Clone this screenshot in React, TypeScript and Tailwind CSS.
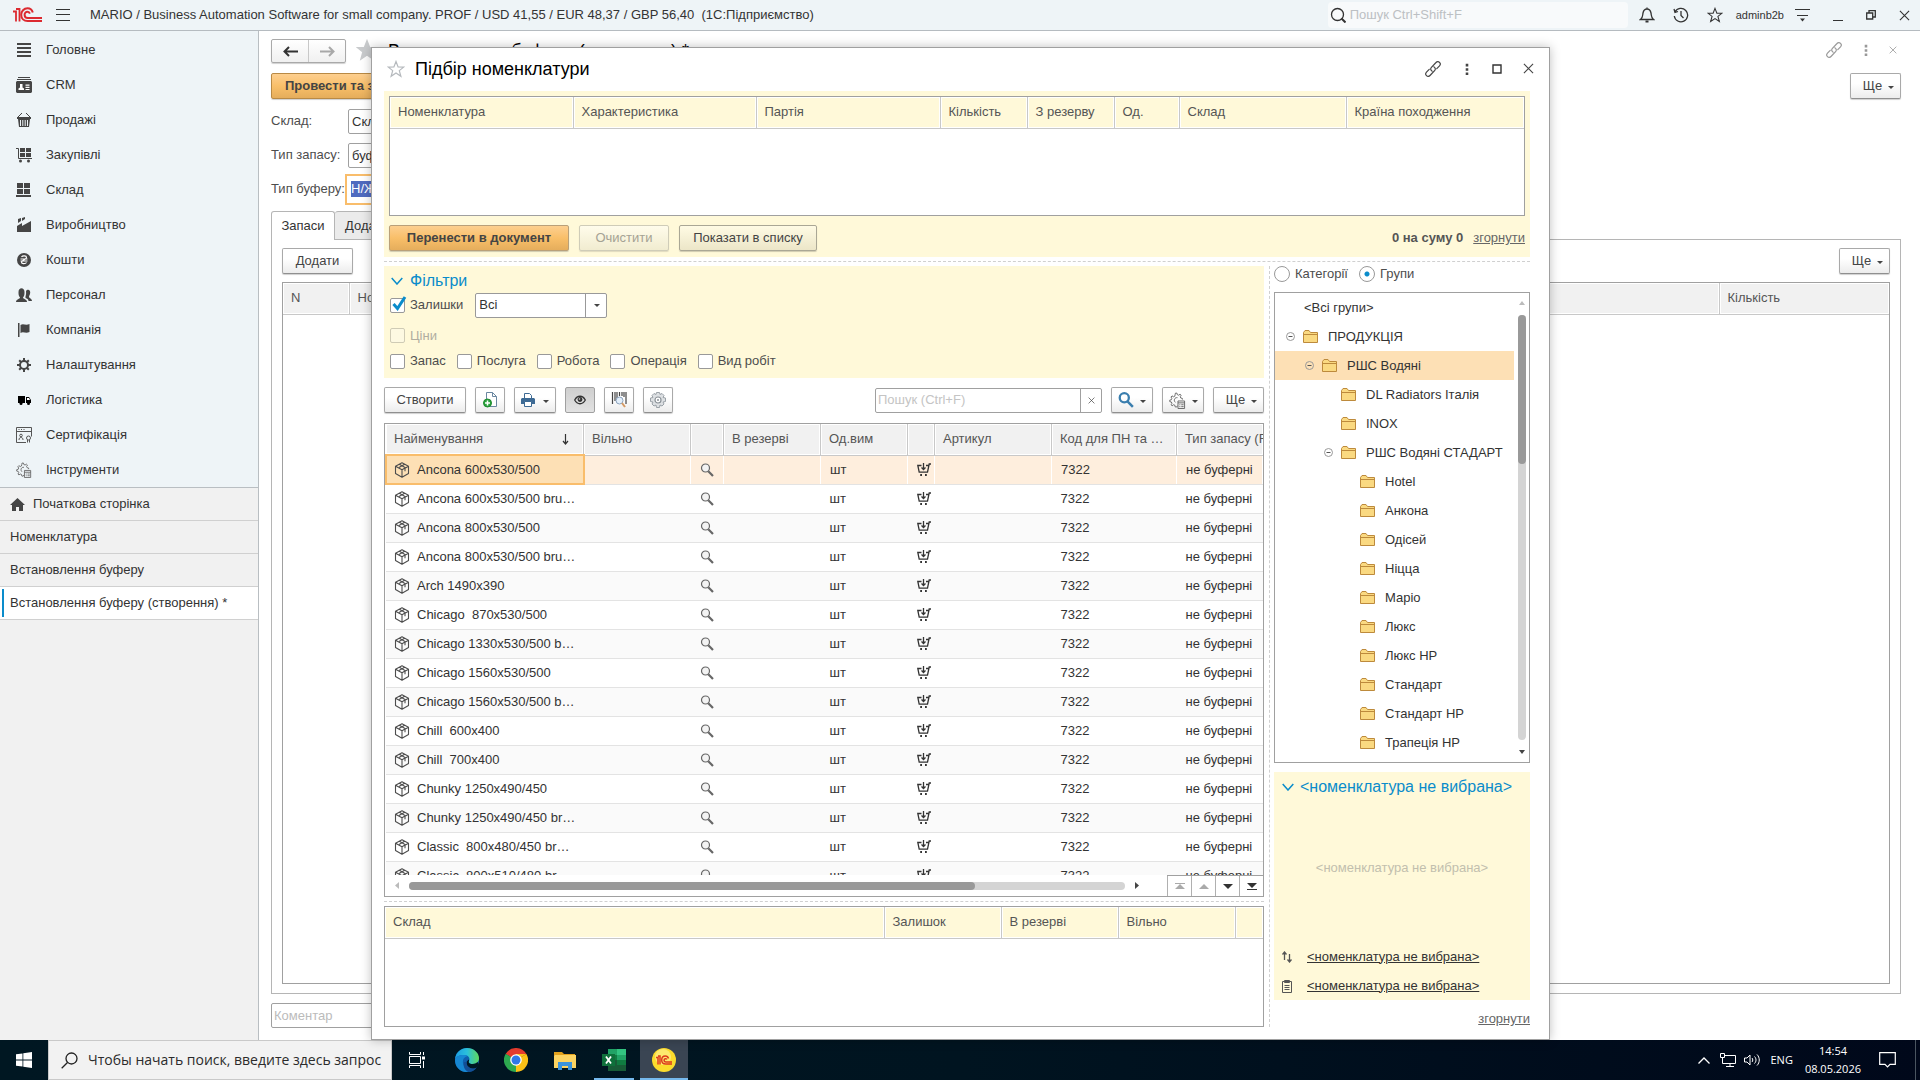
import React from "react";

type IconProps = { className?: string };

/* ---------- shared drawings ---------- */

const Caret = ({ className = "" }: IconProps) => (
  <svg className={`h-[3px] w-1.5 shrink-0 ${className}`} viewBox="0 0 6 3" fill="#444" aria-hidden="true">
    <path d="M0 0h6L3 3z" />
  </svg>
);

const Star = ({ className = "", filled = false }: IconProps & { filled?: boolean }) => (
  <svg className={className} viewBox="0 0 18 18" fill={filled ? "currentColor" : "none"} stroke="currentColor" strokeWidth="1.2" aria-hidden="true">
    <path d="M9 1.500l2.100 5.400 5.600.2-4.400 3.500 1.600 5.700L9 13l-4.900 3.300 1.600-5.700L1.300 7.100l5.600-.2z" />
  </svg>
);

const LinkIcon = ({ className = "" }: IconProps) => (
  <svg className={className} viewBox="0 0 18 18" fill="none" stroke="currentColor" strokeWidth="1.200" strokeLinecap="round" aria-hidden="true">
    <path d="M8.200 11.200c-1.600-.8-2-2.600-.8-3.900L12 2.500c1-1.100 2.500-1.200 3.500-.2s1 2.500 0 3.600l-2.700 2.800" />
    <path d="M9.800 6.800c1.600.8 2 2.600.8 3.900L6 15.500c-1 1.100-2.500 1.200-3.500.2s-1-2.500 0-3.600l2.700-2.800" />
  </svg>
);

const Dots = ({ className = "" }: IconProps) => (
  <svg className={className} viewBox="0 0 4 14" fill="currentColor" aria-hidden="true">
    <path d="M.5 1h3v3h-3zM.5 6h3v3h-3zM.5 11h3v3h-3z" />
  </svg>
);

const Cross = ({ className = "" }: IconProps) => (
  <svg className={className} viewBox="0 0 12 12" fill="none" stroke="currentColor" strokeWidth="1.200" aria-hidden="true">
    <path d="M1 1l10 10M11 1L1 11" />
  </svg>
);

const Logo = () => (
  <svg className="h-4 w-[31px]" viewBox="0 0 31 16" fill="none" stroke="#dc2a30" aria-hidden="true">
    <path d="M1 4.500h3v10M4 2h3.500v12.500" strokeWidth="1.800" />
    <path d="M20.800 5.500C20 2.800 17.900 1.300 15.500 1.300c-3.600 0-6.300 2.900-6.300 6.400 0 3.700 2.700 6.400 6.400 6.400H30" strokeWidth="2" />
    <path d="M17.900 6.600c-.4-1.200-1.300-1.900-2.400-1.900-1.700 0-2.900 1.400-2.900 3.100 0 1.900 1.300 3.200 3.100 3.200H30" strokeWidth="2" />
  </svg>
);

const Chevron = () => (
  <svg className="h-2 w-3 shrink-0" viewBox="0 0 12 8" fill="none" stroke="#0a8ccb" strokeWidth="1.500" aria-hidden="true">
    <path d="M.7 1L6 7l5.300-6" />
  </svg>
);

/* ---------- section icons ---------- */

const Svg16 = ({ children, stroke = false }: { children: React.ReactNode; stroke?: boolean }) => (
  <svg className="size-4 shrink-0" viewBox="0 0 16 16" fill={stroke ? "none" : "#454545"} stroke={stroke ? "#555" : "none"} aria-hidden="true">
    {children}
  </svg>
);

const gearTeeth = "M7 1h2v3H7zM7 12h2v3H7zM1 7h3v2H1zM12 7h3v2h-3zM2.500 3.900L3.900 2.500l2 2-1.400 1.400zM10.100 11.500l1.400-1.400 2 2-1.400 1.400zM12.100 2.500l1.400 1.400-2 2-1.400-1.400zM4.500 10.100l1.400 1.400-2 2-1.400-1.400z";

const CogList = ({ className = "size-4" }: IconProps) => (
  <svg className={`shrink-0 ${className}`} viewBox="0 0 18 18" fill="none" stroke="#666" aria-hidden="true">
    <path d="M9 14.500l-1 1.500-1.500-.3-.3-1.700-1.500-.5L3.300 14.600 2.200 13.500l.9-1.500-.6-1.400-1.700-.4V8.600l1.700-.4.5-1.400-.9-1.500 1.100-1.200 1.500 1 1.400-.6L6.500 2.800 6.800 1.200h1.600l.4 1.600 1.400.6 1.500-1 1.200 1.100-1 1.500.6 1.400 1.700.4v1.200" />
    <path d="M9 6c-3-.6-4.600 3-2.200 5" />
    <path d="M9.500 9.500h7v8h-7zM9.500 11.500h7M11 13.500h1M13 13.500h2.500M11 15.500h1M13 15.500h2.500" />
  </svg>
);

const sections: { label: string; icon: React.ReactNode }[] = [
  { label: "Головне", icon: <Svg16><path d="M1 1h14v2H1zM1 5h14v2H1zM1 9h14v2H1zM1 13h14v2H1z" /></Svg16> },
  { label: "CRM", icon: <Svg16><path d="M2 0h12v1H2zM1 2h14v1H1zM1 4h14l1 1v10l-1 1H1l-1-1V5z" /><path fill="#fff" d="M2.500 13v-1.500L4 10.500V7h2.500v3.500L8 11.500V13zM9.500 7.500h4v1.200h-4zM9.500 9.700h4v1.200h-4zM9.500 11.900h4v1.200h-4z" /></Svg16> },
  { label: "Продажі", icon: <Svg16><path d="M1 5h14v2H1zM2 7h12l-1 8H3z" /><path d="M2 5l4-4M14 5l-4-4" stroke="#454545" /><path d="M4.500 8v6M6.800 8v6M9.200 8v6M11.500 8v6" stroke="#eef4f7" /></Svg16> },
  { label: "Закупівлі", icon: <Svg16><path d="M4 1h5v4H4zM10 1h5v4h-5zM4 6h5v4H4zM10 6h5v4h-5z" /><path d="M0 1.500h2.500v10H16" stroke="#454545" fill="none" /><circle cx="4.500" cy="14" r="1.500" /><circle cx="12.500" cy="14" r="1.500" /></Svg16> },
  { label: "Склад", icon: <Svg16><path d="M1 1h6v5H1zM8 1h6v5H8zM1 7h6v5H1zM8 7h6v5H8zM0 13h15v2H0z" /></Svg16> },
  { label: "Виробництво", icon: <Svg16><path d="M1 15V9l5-3v3l9-5v11zM2 2l3-1v3L2 6zM6 1l3-1v2L6 4z" /></Svg16> },
  { label: "Кошти", icon: <Svg16><circle cx="8" cy="8" r="7" /><path d="M5.500 5c1-1.500 5-1.500 5 .5 0 2-5 2.500-5 4.800 0 1.700 4 1.800 5 .2M4.500 7h7M4.500 9h7" fill="none" stroke="#fff" strokeWidth="1.200" /></Svg16> },
  { label: "Персонал", icon: <Svg16><path d="M0 15c0-3 4-3 4-4.500C2.500 9 2.500 7 2.500 5c0-5 6-5 6 0 0 2 0 4-1.500 5.500C7 12 11 12 11 15zM9.500 9.500C11 5 9 4 11 3c2-1 4 1 3 4-.3 1-1 2-1 3 0 1 3 1.500 3 4h-3.500c0-2-1.500-2.500-3-3z" /></Svg16> },
  { label: "Компанія", icon: <Svg16><path d="M2 1h1.500v14H2zM4.500 3c3-2 5 1 9-1v8c-4 2-6-1-9 1z" /></Svg16> },
  { label: "Налаштування", icon: <Svg16><path d={gearTeeth} /><circle cx="8" cy="8" r="4" fill="none" stroke="#454545" strokeWidth="2" /></Svg16> },
  { label: "Логістика", icon: <Svg16><path fill="#000" d="M2 4h7v7H2zM10 5h3l2 3v3h-5z" /><circle cx="5" cy="11.500" r="1.500" fill="#000" /><circle cx="12.500" cy="11.500" r="1.500" fill="#000" /><path fill="#fff" d="M11 6h2l1 2h-3z" /></Svg16> },
  { label: "Сертифікація", icon: <Svg16 stroke><path d="M10 15.500H.5V.5h15v9M.5 4.500h15M2.500 2.500h1M5 2.500h1M7.500 2.500h1" /><path d="M3 13c0-2 1-2.500 2-2.500s2 .5 2 2.500" /><circle cx="5" cy="8.500" r="1.300" /><circle cx="12.500" cy="11" r="2" /><path d="M11.500 13v2.500M13.500 13v2.500" /></Svg16> },
  { label: "Інструменти", icon: <CogList /> },
];

/* ---------- buttons ---------- */

const btn =
  "flex h-[26px] shrink-0 items-center justify-center rounded-[2px] border border-[#a9a9a9] border-b-[#8f8f8f] bg-linear-to-b from-white from-40% to-[#ececec] text-[#444] shadow-[0_1px_1px_#00000030]";

const MoreButton = () => (
  <button className={`${btn} w-[51px] gap-1.5 pl-1.5`}>
    Ще <Caret className="mt-0.5" />
  </button>
);

/* ---------- background document window ---------- */

function Field({ label, value, selected = false }: { label: string; value: string; selected?: boolean }) {
  return (
    <label className="flex h-[34px] items-center">
      <span className="w-[77px] shrink-0 whitespace-nowrap text-[#4d4d4d]">{label}</span>
      {selected ? (
        <span className="-ml-[3px] flex h-[31px] w-64 items-center border-2 border-[#f9bd6b] pl-1">
          <input className="w-24 bg-[#4f6bc0] text-white outline-none" defaultValue={value} />
        </span>
      ) : (
        <input className="h-[25px] w-64 rounded-[2px] border border-[#a0a0a0] px-[3px] text-[#333] outline-none" defaultValue={value} />
      )}
    </label>
  );
}

function DocumentWindow() {
  return (
    <section className="flex h-full flex-col pt-2 pr-[19px] pb-3 pl-3">
      <header className="flex h-[34px] shrink-0 items-start">
        <div className="flex h-6 w-[75px] rounded-[2px] border border-[#a9a9a9] bg-linear-to-b from-white to-[#f0f0f0] shadow-[0_1px_1px_#00000030]">
          {[false, true].map((forward) => (
            <button key={String(forward)} aria-label={forward ? "Вперед" : "Назад"} className={forward ? "flex flex-1 items-center justify-center border-l border-[#c8c8c8]" : "flex flex-1 items-center justify-center"}>
              <svg className={forward ? "h-[11px] w-[15px] rotate-180" : "h-[11px] w-[15px]"} viewBox="0 0 15 11" fill="none" stroke={forward ? "#a8a8a8" : "#333"} strokeWidth="2" aria-hidden="true">
                <path d="M15 5.500H2M6 1L1.500 5.500 6 10" />
              </svg>
            </button>
          ))}
        </div>
        <Star filled className="ml-2.5 size-[22px] text-[#c9cbcd]" />
        <h1 className="mt-1 ml-2.5 text-[18px] whitespace-nowrap text-black">Встановлення буферу (створення) *</h1>
        <div className="mr-1 ml-auto flex items-center gap-[17px] pt-0.5 text-[#999]">
          <button aria-label="Посилання"><LinkIcon className="size-[18px]" /></button>
          <button aria-label="Меню" className="px-1"><Dots className="h-3 w-1" /></button>
          <button aria-label="Закрити"><Cross className="size-2" /></button>
        </div>
      </header>
      <div className="flex shrink-0 justify-between">
        <button className="h-[26px] rounded-[2px] border border-[#b98a45] bg-linear-to-b from-[#fdcf8f] via-[#f9bf69] to-[#e5ad5c] px-[13px] font-bold text-[#444] shadow-[0_1px_1px_#00000030]">Провести та закрити</button>
        <MoreButton />
      </div>
      <div className="mt-[5px] shrink-0">
        <Field label="Склад:" value="Склад" />
        <Field label="Тип запасу:" value="буферні" />
        <Field label="Тип буферу:" value="Н/Ж" selected />
      </div>
      <div className="mt-[5px] flex h-7 shrink-0">
        <button className="z-10 -mb-px w-16 rounded-t-[3px] border border-b-0 border-[#b5b5b5] bg-white text-[#333]">Запаси</button>
        <button className="rounded-t-[3px] border border-b-0 border-l-0 border-[#b5b5b5] bg-[#ebebeb] px-2.5 text-[#333]">Додатково</button>
      </div>
      <div className="flex min-h-0 flex-1 flex-col border border-[#b5b5b5] px-2.5 pt-2 pb-[9px]">
        <div className="flex justify-between">
          <button className={`${btn} w-[71px]`}>Додати</button>
          <MoreButton />
        </div>
        <div className="mt-2 flex-1 border border-[#a0a0a0]">
          <table className="w-full table-fixed">
            <thead>
              <tr className="h-[31px]">
                {[["N", "w-[66px]"], ["Номенклатура", ""], ["Кількість", "w-[170px]"]].map(([t, w]) => (
                  <th key={t} className={`${w} border-r border-b border-[#c8c8c8] bg-[#f1f1f1] px-2 text-left font-normal text-[#555] shadow-[inset_0_0_0_1px_#fff] last:border-r-0`}>{t}</th>
                ))}
              </tr>
            </thead>
          </table>
        </div>
      </div>
      <input aria-label="Коментар" placeholder="Коментар" className="mt-[9px] h-[25px] w-[600px] shrink-0 rounded-[2px] border border-[#a0a0a0] px-0.5 outline-none placeholder:text-[#bbb]" />
    </section>
  );
}

/* ---------- selection dialog ---------- */

function YellowTable({ columns }: { columns: [string, string][] }) {
  return (
    <table className="w-full table-fixed">
      <thead>
        <tr className="h-[31px]">
          {columns.map(([t, w], i) => (
            <th key={i} className={`${w} border-r border-b border-[#c8c8c8] bg-[#fff9d9] px-2 text-left font-normal whitespace-nowrap text-[#555] shadow-[inset_0_0_0_1px_#fff] last:border-r-0`}>{t}</th>
          ))}
        </tr>
      </thead>
    </table>
  );
}

function Check({ label, checked = false, disabled = false }: { label: string; checked?: boolean; disabled?: boolean }) {
  return (
    <label className={disabled ? "flex items-center gap-[5px] text-[#b0ada0]" : "flex items-center gap-[5px] text-[#4d4d4d]"}>
      <span className="relative size-[15px]">
        <input type="checkbox" defaultChecked={checked} disabled={disabled} className="block size-[15px] appearance-none rounded-[2px] border border-[#999] bg-white disabled:border-[#cfcbb5] disabled:bg-[#fdf9e2]" />
        {checked && (
          <svg className="pointer-events-none absolute -top-0.5 left-0.5 size-[15px]" viewBox="0 0 15 15" fill="none" stroke="#0a8ccb" strokeWidth="3" aria-hidden="true">
            <path d="M1.500 8l4 4.500L13 1" />
          </svg>
        )}
      </span>
      {label}
    </label>
  );
}

const Magnifier = ({ blue = false }: { blue?: boolean }) => (
  <svg className={blue ? "size-4" : "mx-auto size-3.5"} viewBox="0 0 14 14" fill="none" stroke={blue ? "#3a7eae" : "#666"} aria-hidden="true">
    <circle cx="5.500" cy="5" r="4" strokeWidth={blue ? 2 : 1.200} fill={blue ? "none" : "#f3f3f3"} />
    <path d="M8.300 8.300L13 13" strokeWidth="2.200" />
  </svg>
);

const BoxIcon = () => (
  <svg className="size-4 shrink-0" viewBox="0 0 16 16" fill="none" stroke="#4d4d4d" strokeWidth="1.100" strokeLinejoin="round" aria-hidden="true">
    <path d="M8 .8l6.500 3.400v7.400L8 15.200l-6.500-3.600V4.200zM1.500 4.200L8 7.700M10.500 6.400L14.500 4.200M8 7.700v7.500M5.300 2.300L11 5.600v3.600M10.700 2.300L5 5.600M8 7.700l3-1.600" />
  </svg>
);

const CartIcon = () => (
  <svg className="h-3.5 w-4 shrink-0" viewBox="0 0 16 14" fill="none" stroke="#333" strokeWidth="1.300" aria-hidden="true">
    <path d="M5.500 2.500H1.800l1.400 6.700h8.300L13.200 1H15M10 2.500h2.500M7.500 0v6M5.500 4.500l2 2 2-2" />
    <path d="M4.200 12h1.800M9 12h1.800" strokeWidth="2.200" />
  </svg>
);

const Folder = () => (
  <svg className="h-[13px] w-[15px] shrink-0" viewBox="0 0 15 13" fill="#fad981" stroke="#bd8a3c" aria-hidden="true">
    <path d="M.5 12.500V2.500l1.500-2h4l1.500 2h7v10zM.5 4.500h14" />
  </svg>
);

const items = [
  "Ancona 600x530/500", "Ancona 600x530/500 bru…", "Ancona 800x530/500", "Ancona 800x530/500 bru…", "Arch 1490x390",
  "Chicago  870x530/500", "Chicago 1330x530/500 b…", "Chicago 1560x530/500", "Chicago 1560x530/500 b…", "Chill  600x400",
  "Chill  700x400", "Chunky 1250x490/450", "Chunky 1250x490/450 br…", "Classic  800x480/450 br…", "Classic  800x510/480 br…",
];

const itemColumns: [string, string][] = [
  ["Найменування", ""], ["Вільно", "w-[107px]"], ["", "w-[33px]"], ["В резерві", "w-[97px]"], ["Од.вим", "w-[87px]"],
  ["", "w-[27px]"], ["Артикул", "w-[117px]"], ["Код для ПН та …", "w-[125px]"], ["Тип запасу (F", "w-[86px]"],
];

function ItemsTable() {
  return (
    <div className="flex min-h-0 flex-1 flex-col overflow-hidden border border-[#a0a0a0]">
      <div className="h-0 flex-1 overflow-hidden">
        <table className="w-full table-fixed text-[#333]">
          <thead>
            <tr className="h-[31px]">
              {itemColumns.map(([t, w], i) => (
                <th key={i} className={`${w} overflow-hidden border-r border-b border-[#c8c8c8] bg-[#f1f1f1] pl-2 text-left font-normal whitespace-nowrap text-[#555] shadow-[inset_0_0_0_1px_#fff] last:border-r-0`}>
                  {i === 0 ? (
                    <span className="flex items-center justify-between pr-3.5">
                      {t}
                      <svg className="h-[11px] w-[7px]" viewBox="0 0 7 11" fill="none" stroke="#333" strokeWidth="1.200" aria-hidden="true">
                        <path d="M3.500 0v10M1 7l2.500 3L6 7" />
                      </svg>
                    </span>
                  ) : t}
                </th>
              ))}
            </tr>
          </thead>
          <tbody>
            {items.map((name, i) => {
              const cell = i === 0 ? "border-r border-b border-r-white border-b-[#e3e3e3]" : "border-b border-[#e3e3e3]";
              return (
                <tr key={name} className={i === 0 ? "h-[29px] bg-[#feeedd]" : "h-[29px] odd:bg-[#fafafa]"}>
                  <td className={i === 0 ? "border-2 border-[#f9bd6b] bg-[#fde0b5] pl-[7px]" : "border-b border-[#e3e3e3] pl-2"}>
                    <span className="flex items-center gap-[7px] whitespace-pre"><BoxIcon />{name}</span>
                  </td>
                  <td className={cell} />
                  <td className={cell}><Magnifier /></td>
                  <td className={cell} />
                  <td className={`${cell} pl-[9px]`}>шт</td>
                  <td className={`${cell} pl-2`}><CartIcon /></td>
                  <td className={cell} />
                  <td className={`${cell} pl-[9px]`}>7322</td>
                  <td className={`${cell} pl-[9px] whitespace-nowrap`}>не буферні</td>
                </tr>
              );
            })}
          </tbody>
        </table>
      </div>
      <div className="flex h-[21px] shrink-0 items-center">
        <svg className="ml-2.5 h-[7px] w-1" viewBox="0 0 4 7" fill="#bbb" aria-hidden="true"><path d="M4 0v7L0 3.500z" /></svg>
        <div className="ml-2.5 h-2 flex-1 rounded-full bg-[#d4d4d4]">
          <div className="h-2 w-[79%] rounded-full bg-[#999]" />
        </div>
        <svg className="ml-2.5 h-[7px] w-1" viewBox="0 0 4 7" fill="#444" aria-hidden="true"><path d="M0 0v7l4-3.500z" /></svg>
        <div className="ml-7 flex h-full border-t border-[#a0a0a0]">
          {[
            { name: "На початок", d: "M1 3h10v1H1zM6 4l5 5H1z", off: true },
            { name: "Вгору", d: "M6 4l5 5H1z", off: true },
            { name: "Вниз", d: "M1 4h10L6 9z", off: false },
            { name: "У кінець", d: "M1 3h10L6 8zM1 9h10v1H1z", off: false },
          ].map((b) => (
            <button key={b.name} aria-label={b.name} disabled={b.off} className="flex w-6 items-center justify-center border-l border-[#b0b0b0] text-[#333] disabled:text-[#aaa]">
              <svg className="size-3" viewBox="0 0 12 12" fill="currentColor" aria-hidden="true"><path d={b.d} /></svg>
            </button>
          ))}
        </div>
      </div>
    </div>
  );
}

function Toolbar() {
  return (
    <div className="mt-[9px] flex items-center gap-[9px]">
      <button className={`${btn} w-[82px]`}>Створити</button>
      <button aria-label="Створити копіюванням" className={`${btn} w-[30px]`}>
        <svg className="h-4 w-3.5" viewBox="0 0 14 16" fill="#fff" stroke="#6a87a0" aria-hidden="true">
          <path d="M3.500 14.500V.5h6l4 4v10zM9.500.5v4h4" />
          <circle cx="4.500" cy="11" r="4" fill="#2aa33c" stroke="#1d8a2e" />
          <path d="M4.500 8.500v5M2 11h5" stroke="#fff" strokeWidth="1.500" />
        </svg>
      </button>
      <button aria-label="Друк" className={`${btn} w-[42px] gap-2`}>
        <svg className="h-3.5 w-3.5" viewBox="0 0 14 14" aria-hidden="true">
          <path d="M3.500 5V.5h5L10.500 2.500V5" fill="#fff" stroke="#3d6a94" />
          <path d="M0 6l1-1h12l1 1v5H0z" fill="#3d6a94" />
          <path d="M3.500 8.500h7v5h-7z" fill="#fff" stroke="#3d6a94" />
        </svg>
        <Caret className="mt-0.5" />
      </button>
      <button aria-label="Перегляд" aria-pressed="true" className="flex h-[26px] w-[30px] items-center justify-center rounded-[2px] border border-[#a0a0a0] bg-linear-to-b from-[#cfcfcf] to-[#e2e2e2]">
        <svg className="h-2.5 w-3" viewBox="0 0 12 10" fill="none" stroke="#333" strokeWidth="1.300" aria-hidden="true">
          <path d="M.7 5c2.600-5 8-5 10.600 0-2.600 5-8 5-10.600 0z" /><circle cx="6" cy="4.500" r="1.800" fill="#333" />
          <circle cx="5.500" cy="4" r=".8" fill="#ddd" stroke="none" />
        </svg>
      </button>
      <button aria-label="Пошук за штрихкодом" className={`${btn} w-[30px]`}>
        <svg className="size-4" viewBox="0 0 16 16" fill="none" aria-hidden="true">
          <path d="M1.500 0v12M4 0v9M6 0v6M8.500 0v4M11 0v4M13 0v5M15 0v12" stroke="#444" strokeWidth="1.200" />
          <circle cx="8.500" cy="8.500" r="3.500" fill="#e3effa" stroke="#8ba2bd" />
          <path d="M11 11l3 4" stroke="#d49a64" strokeWidth="2" />
        </svg>
      </button>
      <button aria-label="Налаштування" className={`${btn} w-[30px]`}>
        <svg className="size-4" viewBox="0 0 16 16" aria-hidden="true">
          <path d="M6.500.5h3l.5 2 2-1 2 2-1 2 2.500.5v3.500l-2.500.5 1 2-2 2-2-1-.5 2.500h-3L6 13l-2 1-2-2 1-2-2.500-.5V6L3 5.500l-1-2 2-2 2 1z" fill="#dde0e3" stroke="#9aa1a7" />
          <circle cx="8" cy="8" r="3" fill="#fff" stroke="#8b9298" strokeWidth="1.200" />
          <circle cx="8" cy="8" r="1" fill="#8b9298" />
        </svg>
      </button>
      <div className="ml-auto flex h-[25px] w-[227px] rounded-[2px] border border-[#a0a0a0]">
        <input aria-label="Пошук" placeholder="Пошук (Ctrl+F)" className="min-w-0 flex-1 px-0.5 outline-none placeholder:text-[#c4c4c4]" />
        <button aria-label="Очистити пошук" className="flex w-[21px] items-center justify-center border-l border-[#a0a0a0] text-[#444]"><Cross className="size-[7px]" /></button>
      </div>
      <button aria-label="Знайти" className={`${btn} w-[42px] gap-1.5`}><Magnifier blue /><Caret className="mt-0.5" /></button>
      <button aria-label="Налаштування списку" className={`${btn} w-[42px] gap-1.5`}><CogList className="size-[17px]" /><Caret className="mt-0.5" /></button>
      <MoreButton />
    </div>
  );
}

const tree: { label: string; pad: string; open?: boolean; folder?: boolean; selected?: boolean }[] = [
  { label: "<Всі групи>", pad: "pl-[29px]", folder: false },
  { label: "ПРОДУКЦІЯ", pad: "pl-[11px]", open: true },
  { label: "РШС Водяні", pad: "pl-[30px]", open: true, selected: true },
  { label: "DL Radiators Італія", pad: "pl-[66px]" },
  { label: "INOX", pad: "pl-[66px]" },
  { label: "РШС Водяні СТАДАРТ", pad: "pl-[49px]", open: true },
  ...["Hotel", "Анкона", "Одісей", "Ніцца", "Маріо", "Люкс", "Люкс НР", "Стандарт", "Стандарт НР", "Трапеція НР"].map((label) => ({ label, pad: "pl-[85px]" })),
];

function GroupsPanel() {
  return (
    <aside className="flex w-64 shrink-0 flex-col">
      <div className="flex h-[26px] shrink-0 items-start gap-[11px] text-[#4d4d4d]">
        {["Категорії", "Групи"].map((t, i) => (
          <label key={t} className="flex items-center gap-[5px]">
            <input type="radio" name="view" defaultChecked={i === 1} className="size-4 appearance-none rounded-full border border-[#999] bg-white checked:bg-[radial-gradient(circle,#0a8ccb_2px,#fff_3px)]" />
            {t}
          </label>
        ))}
      </div>
      <div className="flex min-h-0 flex-1 overflow-hidden border border-[#a0a0a0]">
        <ul className="min-w-0 flex-1 text-[#333]">
          {tree.map((n) => (
            <li key={n.label} className={`${n.pad} ${n.selected ? "bg-[#fde0b5]" : ""} flex h-[29px] items-center whitespace-nowrap`}>
              {n.open && (
                <svg className="mr-2 size-[9px] shrink-0" viewBox="0 0 9 9" fill="none" stroke="#999" aria-hidden="true">
                  <circle cx="4.500" cy="4.500" r="4" /><path d="M2.500 4.500h4" stroke="#555" />
                </svg>
              )}
              {n.folder !== false && <Folder />}
              <span className={n.folder === false ? "" : "ml-2.5"}>{n.label}</span>
            </li>
          ))}
        </ul>
        <div className="flex w-[15px] shrink-0 flex-col items-center py-2">
          <svg className="h-1 w-1.5" viewBox="0 0 6 4" fill="#bbb" aria-hidden="true"><path d="M3 0l3 4H0z" /></svg>
          <div className="my-2.5 w-2 flex-1 rounded-full bg-[#d4d4d4]"><div className="h-[35%] rounded-full bg-[#999]" /></div>
          <svg className="h-1 w-1.5" viewBox="0 0 6 4" fill="#444" aria-hidden="true"><path d="M0 0h6L3 4z" /></svg>
        </div>
      </div>
      <div className="mt-[9px] flex h-[228px] shrink-0 flex-col bg-[#fff9d9] px-2">
        <h3 className="flex h-[30px] items-center gap-1.5 text-[16px] whitespace-nowrap text-[#0a8ccb]"><Chevron />&lt;номенклатура не вибрана&gt;</h3>
        <p className="flex flex-1 items-center justify-center pb-2 text-[#c2bfae]">&lt;номенклатура не вибрана&gt;</p>
        <div className="flex h-[29px] items-center gap-[15px]">
          <svg className="h-3 w-2.5" viewBox="0 0 10 12" fill="none" stroke="#555" strokeWidth="1.300" aria-hidden="true"><path d="M2.500 9V1M.5 3.500l2-2.500 2 2.500M7.500 3v8M5.500 8.500l2 2.500 2-2.500" /></svg>
          <a href="#" className="text-[#333] underline">&lt;номенклатура не вибрана&gt;</a>
        </div>
        <div className="flex h-[29px] items-center gap-[15px]">
          <svg className="h-3.5 w-2.5" viewBox="0 0 10 14" fill="none" stroke="#555" aria-hidden="true"><path d="M.5 2.500h9v11h-9zM2.500 1.500h5v2h-5zM2.500 6.500h5M2.500 8.500h5M2.500 10.500h5" /></svg>
          <a href="#" className="text-[#333] underline">&lt;номенклатура не вибрана&gt;</a>
        </div>
      </div>
      <div className="flex h-[27px] shrink-0 items-end justify-end"><a href="#" className="text-[#666] underline">згорнути</a></div>
    </aside>
  );
}

const DashRow = () => <div className="flex h-[9px] shrink-0 items-center"><div className="w-full border-t border-dashed border-[#d0d0d0]" /></div>;

function SelectionDialog() {
  return (
    <section role="dialog" aria-label="Підбір номенклатури" className="absolute top-4 right-[370px] bottom-0 left-28 z-20 flex flex-col border border-[#a0a0a0] bg-white pr-[19px] pb-3 pl-3 shadow-[0_0_10px_#00000040]">
      <header className="flex h-[43px] shrink-0 items-center pb-0.5">
        <Star className="ml-[3px] size-[18px] text-[#b5b9bd]" />
        <h2 className="ml-2.5 text-[18px] text-black">Підбір номенклатури</h2>
        <div className="-mr-1 ml-auto flex items-center gap-[21px] text-[#444]">
          <button aria-label="Посилання"><LinkIcon className="size-[18px]" /></button>
          <button aria-label="Меню" className="px-0.5"><Dots className="h-3 w-1" /></button>
          <button aria-label="Розгорнути">
            <svg className="size-2.5" viewBox="0 0 10 10" fill="none" stroke="#333" strokeWidth="1.400" aria-hidden="true"><path d="M1 1h8v8H1z" /></svg>
          </button>
          <button aria-label="Закрити"><Cross className="size-[11px]" /></button>
        </div>
      </header>
      <div className="shrink-0 bg-[#fff9d9] px-[5px] pt-[5px] pb-1.5">
        <div className="h-[120px] border border-[#a0a0a0] bg-white">
          <YellowTable columns={[["Номенклатура", ""], ["Характеристика", "w-[183px]"], ["Партія", "w-[184px]"], ["Кількість", "w-[87px]"], ["З резерву", "w-[87px]"], ["Од.", "w-[65px]"], ["Склад", "w-[167px]"], ["Країна походження", "w-[178px]"]]} />
        </div>
        <div className="mt-[9px] flex items-center gap-[10px]">
          <button className="h-[26px] w-[180px] rounded-[2px] border border-[#b9a07a] bg-linear-to-b from-[#fdcf8f] via-[#f9bf69] to-[#e5ad5c] font-bold text-[#444] shadow-[0_1px_1px_#00000030]">Перенести в документ</button>
          <button disabled className="h-[26px] w-[90px] rounded-[2px] border border-[#cfccb8] bg-linear-to-b from-[#fffceb] to-[#f1ecd0] text-[#a5a294] shadow-[0_1px_1px_#00000020]">Очистити</button>
          <button className="h-[26px] w-[138px] rounded-[2px] border border-[#aaa795] bg-linear-to-b from-[#fffbe4] to-[#ece6c8] text-[#444] shadow-[0_1px_1px_#00000030]">Показати в списку</button>
          <span className="ml-auto font-bold text-[#555]">0 на суму 0</span>
          <a href="#" className="text-[#666] underline">згорнути</a>
        </div>
      </div>
      <DashRow />
      <div className="flex min-h-0 flex-1">
        <div className="flex min-w-0 flex-1 flex-col">
          <div className="h-28 shrink-0 bg-[#fff9d9] pt-1 pl-1.5">
            <h3 className="flex h-[22px] items-center gap-[7px] pl-px text-[16px] text-[#0a8ccb]"><Chevron />Фільтри</h3>
            <div className="flex h-[26px] items-center gap-3">
              <Check label="Залишки" checked />
              <span className="relative">
                <select aria-label="Залишки" className="block h-[25px] w-[132px] appearance-none rounded-[2px] border border-[#999] bg-white px-[3px] text-[#333]"><option>Всі</option></select>
                <span className="pointer-events-none absolute inset-y-0 right-0 flex w-[22px] items-center justify-center border-l border-[#999]"><Caret /></span>
              </span>
            </div>
            <div className="flex h-[35px] items-center"><Check label="Ціни" disabled /></div>
            <div className="flex items-center gap-[11px]">
              {["Запас", "Послуга", "Робота", "Операція", "Вид робіт"].map((t) => <Check key={t} label={t} />)}
            </div>
          </div>
          <Toolbar />
          <div className="mt-[10px] flex min-h-0 flex-1"><div className="flex min-w-0 flex-1"><ItemsTable /></div></div>
          <DashRow />
          <div className="h-[121px] shrink-0 border border-[#a0a0a0]">
            <YellowTable columns={[["Склад", ""], ["Залишок", "w-[117px]"], ["В резерві", "w-[117px]"], ["Вільно", "w-[117px]"], ["", "w-7"]]} />
          </div>
        </div>
        <div className="flex w-2.5 shrink-0 justify-center"><div className="h-full border-l border-dashed border-[#d0d0d0]" /></div>
        <GroupsPanel />
      </div>
    </section>
  );
}

/* ---------- application frame ---------- */

function TitleBar() {
  return (
    <header className="flex h-[31px] shrink-0 items-center border-b border-[#b5bbc0] bg-[#eef4f7] pr-2.5 pl-3 text-[#333]">
      <Logo />
      <button aria-label="Головне меню" className="ml-[13px]">
        <svg className="h-3 w-3.5" viewBox="0 0 14 12" stroke="#333" aria-hidden="true"><path d="M0 .5h14M0 5.500h14M0 11.500h14" /></svg>
      </button>
      <span className="ml-5 text-[13px] whitespace-nowrap">MARIO / Business Automation Software for small company. PROF / USD 41,55 / EUR 48,37 / GBP 56,40&nbsp; (1С:Підприємство)</span>
      <label className="ml-auto flex h-[26px] w-[300px] items-center gap-1 rounded bg-[#f8fafb] px-0.5">
        <svg className="size-4" viewBox="0 0 16 16" fill="none" stroke="#333" strokeWidth="1.300" aria-hidden="true"><circle cx="7.500" cy="7.500" r="6" /><path d="M11.500 11.500l4 4" strokeWidth="2" /></svg>
        <input aria-label="Глобальний пошук" placeholder="Пошук Ctrl+Shift+F" className="flex-1 outline-none placeholder:text-[#bcc0c3]" />
      </label>
      <div className="ml-[11px] flex items-center gap-[18px]">
        <button aria-label="Сповіщення"><svg className="size-4" viewBox="0 0 16 16" fill="none" stroke="#333" strokeWidth="1.300" aria-hidden="true"><path d="M1.500 12.500h13c-2.500-2-2-4-2.500-6.500C11.500 3.500 10 2 8 2S4.500 3.500 4 6c-.5 2.500 0 4.500-2.500 6.500zM8 .5V2" /><path d="M6.500 14.500h3" strokeWidth="2" /></svg></button>
        <button aria-label="Історія"><svg className="size-4" viewBox="0 0 16 16" fill="none" stroke="#333" strokeWidth="1.300" aria-hidden="true"><path d="M2 5a6.700 6.700 0 1 1-.7 4M1 2l1 3.500L5 4.500M8 4v4.500l2.500 2.500" /></svg></button>
        <button aria-label="Обране"><Star className="size-4" /></button>
      </div>
      <button className="ml-[13px] text-[11px]">adminb2b</button>
      <div className="ml-[11px] flex items-center">
        <button aria-label="Сервіс"><svg className="h-3.5 w-[15px]" viewBox="0 0 15 14" aria-hidden="true"><path d="M0 1.500h15M2 7.500h11" stroke="#333" /><path d="M5 10.500h5l-2.500 3z" fill="#333" /></svg></button>
        <button aria-label="Згорнути" className="mt-2.5 ml-[23px] h-px w-2.5 bg-[#333]" />
        <button aria-label="Відновити" className="ml-[23px]"><svg className="size-2.5" viewBox="0 0 10 10" fill="none" stroke="#333" strokeWidth="1.300" aria-hidden="true"><path d="M.7 3h6v6h-6zM3 3V.7h6.300V7H7" /></svg></button>
        <button aria-label="Закрити" className="ml-[23px]"><Cross className="size-[11px]" /></button>
      </div>
    </header>
  );
}

function Sidebar() {
  return (
    <nav className="flex w-[259px] shrink-0 flex-col border-r border-[#b9bec2] bg-[#f1f1f1] text-[#333]">
      <ul className="border-b border-[#b9bec2] bg-[#eef4f7] pt-px">
        {sections.map((s) => (
          <li key={s.label}><a href="#" className="flex h-[35px] items-center gap-3.5 pl-4">{s.icon}{s.label}</a></li>
        ))}
      </ul>
      <a href="#" className="flex h-[33px] items-center gap-2 border-b border-[#d0d0d0] pl-2.5">
        <svg className="h-[13px] w-[15px]" viewBox="0 0 15 13" fill="#454545" aria-hidden="true"><path d="M7.500 0L15 7h-2v6H9V9H6v4H2V7H0z" /></svg>
        Початкова сторінка
      </a>
      <a href="#" className="flex h-[33px] items-center border-b border-[#d0d0d0] pl-2.5">Номенклатура</a>
      <a href="#" className="flex h-[33px] items-center border-b border-[#d0d0d0] pl-2.5">Встановлення буферу</a>
      <a href="#" className="flex h-[33px] items-center border-b border-[#d0d0d0] bg-white py-0.5 pl-0.5">
        <span className="flex h-full items-center border-l-2 border-[#0a8ccb] pl-1.5">Встановлення буферу (створення) *</span>
      </a>
    </nav>
  );
}

function Taskbar() {
  return (
    <footer className="flex h-10 shrink-0 items-stretch bg-linear-to-r from-[#001722] via-[#001420] to-[#00081a] font-['Open_Sans',sans-serif] text-white">
      <button aria-label="Пуск" className="flex w-12 items-center justify-center">
        <svg className="size-4" viewBox="0 0 16 16" fill="#fff" aria-hidden="true"><path d="M0 2.300L6.500 1.400v6.200H0zM7.300 1.300L16 0v7.600H7.300zM0 8.400h6.500v6.200L0 13.700zM7.300 8.400H16V16l-8.700-1.300z" /></svg>
      </button>
      <label className="flex w-[344px] items-center gap-2.5 border border-[#c9c9c9] bg-[#f2f2f2] pl-3 text-[#222]">
        <svg className="size-[17px] shrink-0" viewBox="0 0 17 17" fill="none" stroke="#222" strokeWidth="1.300" aria-hidden="true"><circle cx="10.500" cy="6.500" r="5.500" /><path d="M6.500 10.500L.7 16.300" /></svg>
        <input aria-label="Пошук Windows" placeholder="Чтобы начать поиск, введите здесь запрос" className="min-w-0 flex-1 text-[14px] outline-none placeholder:text-[#2b2b2b]" />
      </label>
      <button aria-label="Подання завдань" className="flex w-[50px] items-center justify-center">
        <svg className="size-4" viewBox="0 0 16 16" fill="none" stroke="#fff" aria-hidden="true"><path d="M.5 0v2.500h11V0M.5 4.500h11v7H.5zM.5 16v-2.500h11V16M14.500 0v3M14.500 9v7" /><path d="M14.500 4.500v3" strokeWidth="3" /></svg>
      </button>
      <button aria-label="Edge" className="flex w-[50px] items-center justify-center">
        <svg className="size-6" viewBox="0 0 24 24" aria-hidden="true">
          <defs><linearGradient id="edgeTop" x1="0" x2="1"><stop offset="0" stopColor="#1b9de2" /><stop offset=".5" stopColor="#2bc0dc" /><stop offset="1" stopColor="#5fd85a" /></linearGradient></defs>
          <circle cx="12" cy="12" r="12" fill="#0f5fae" />
          <path d="M0 11C1 4 6 0 12 0c7 0 12 5 12 10 0 4-3 6-6.500 6-3 0-4.500-1.500-3.500-3 1.500-2.500-.5-6-5-6-5 0-8 2-9 4z" fill="url(#edgeTop)" />
          <path d="M0 12c0-3 4-5 8.500-5 1.500 0 3 .3 4 1-4 1-5 4-4.500 7 .5 4 4 7 7 8.500C7 26 0 20 0 12z" fill="#1687d2" />
          <path d="M14 13c-1 1.500.5 3 3.500 3 2 0 4-1 5-2l1.500 2.500-2.500 3.500c-5 2.500-11-1-10-5.500.3-1.500 1.500-2.500 2.500-3z" fill="#001722" />
          <path d="M11.700 14c-.5 5 5 8 10 5.500-2 3-5 4.500-8.500 4.500C9 22 8 17 9 14z" fill="#124f96" />
        </svg>
      </button>
      <button aria-label="Chrome" className="flex w-12 items-center justify-center">
        <svg className="size-6" viewBox="0 0 24 24" aria-hidden="true">
          <path d="M12 12L1.600 6A12 12 0 0 1 22.400 6z" fill="#e33b2e" /><path d="M12 12L22.400 6A12 12 0 0 1 12 24z" fill="#fbc116" /><path d="M12 12v12A12 12 0 0 1 1.600 6z" fill="#2da94f" />
          <path d="M12 6h10.400L12 12z" fill="#fbc116" /><path d="M12 24l5.200-9L12 12z" fill="#fbc116" /><path d="M1.600 6l5.200 9L12 12z" fill="#2da94f" />
          <circle cx="12" cy="12" r="5.800" fill="#fff" /><circle cx="12" cy="12" r="4.500" fill="#2f78e8" />
        </svg>
      </button>
      <button aria-label="Провідник" className="flex w-[50px] items-center justify-center">
        <svg className="h-[19px] w-[22px]" viewBox="0 0 22 19" aria-hidden="true"><path d="M0 1h8l2 2h11v5H0z" fill="#e2a11c" /><path d="M1 4h21v13H0V5z" fill="#fcd462" /><path d="M4 11h14v8h-4v-4H8v4H4z" fill="#3b93dc" /></svg>
      </button>
      <button aria-label="Excel" className="mx-1 flex w-10 items-center justify-center border-b-2 border-[#76b9ed] pt-0.5">
        <svg className="h-[22px] w-6" viewBox="0 0 24 22" aria-hidden="true">
          <path d="M6 0h9v6H6z" fill="#21a366" /><path d="M15 0h9v6h-9z" fill="#33c481" /><path d="M6 6h9v5H6z" fill="#107c41" /><path d="M15 6h9v5h-9z" fill="#21a366" /><path d="M6 11h18v11H6z" fill="#185c37" /><path d="M15 11h9v5h-9z" fill="#107c41" />
          <path d="M0 5h13v12H0z" fill="#0f703b" /><path d="M4 7.500l5 7M9 7.500l-5 7" stroke="#fff" strokeWidth="1.800" />
        </svg>
      </button>
      <button aria-label="1С" className="ml-0.5 flex w-12 items-center justify-center border-b-2 border-[#76b9ed] bg-[#3a4553] pt-0.5">
        <svg className="size-6" viewBox="0 0 24 24" fill="none" aria-hidden="true">
          <circle cx="12" cy="12" r="12" fill="#fbdb2c" /><circle cx="11" cy="9" r="8" fill="#fdea6e" />
          <path d="M4 9.500h2v7M6 8h2v8.500M16.500 10.500c-.5-1.800-1.700-2.500-3.100-2.500-2.200 0-3.700 1.800-3.700 4s1.500 4 4 4H20M14.800 11.500c-.7-1.300-2.700-.9-2.700.7 0 1.100.7 1.700 1.800 1.700H20" stroke="#dc3a1c" strokeWidth="1.500" />
        </svg>
      </button>
      <div className="ml-auto flex items-center pr-1 text-[11px]">
        <svg className="h-[7px] w-3" viewBox="0 0 12 7" fill="none" stroke="#fff" strokeWidth="1.300" aria-hidden="true"><path d="M.5 6.500L6 1l5.500 5.500" /></svg>
        <svg className="ml-2.5 h-3.5 w-4" viewBox="0 0 16 14" fill="none" stroke="#fff" aria-hidden="true"><path d="M5 2.500h10.500v8H5M10 10.500v3M6 13.500h8M.5.5h4v4h-4zM2.500 4.500v6H5" /></svg>
        <svg className="ml-2 h-3.5 w-4" viewBox="0 0 16 14" fill="none" stroke="#fff" aria-hidden="true"><path d="M.5 5v4H3l3 3V2L3 5zM8 5c1 1 1 3 0 4M10.500 3.500c2 2 2 5 0 7M13 1.500c3 3 3 8 0 11" /></svg>
        <span className="ml-2.5">ENG</span>
        <span className="ml-3 flex flex-col items-center leading-[18px]"><span>14:54</span><span>08.05.2026</span></span>
        <svg className="ml-[18px] h-4 w-[17px]" viewBox="0 0 17 16" fill="none" stroke="#fff" strokeWidth="1.200" aria-hidden="true"><path d="M.7.700h15.600v11.600H11l-2.500 2.500L6 12.300H.7z" /></svg>
        <span className="ml-[19px] h-10 w-px bg-[#4a5560]" />
      </div>
    </footer>
  );
}

export default function App() {
  return (
    <div className="flex h-screen flex-col overflow-hidden bg-white font-['Liberation_Sans',Arial,sans-serif] text-[13px] leading-4">
      <TitleBar />
      <main className="flex min-h-0 flex-1">
        <Sidebar />
        <div className="relative min-w-0 flex-1">
          <DocumentWindow />
          <SelectionDialog />
        </div>
      </main>
      <Taskbar />
    </div>
  );
}
